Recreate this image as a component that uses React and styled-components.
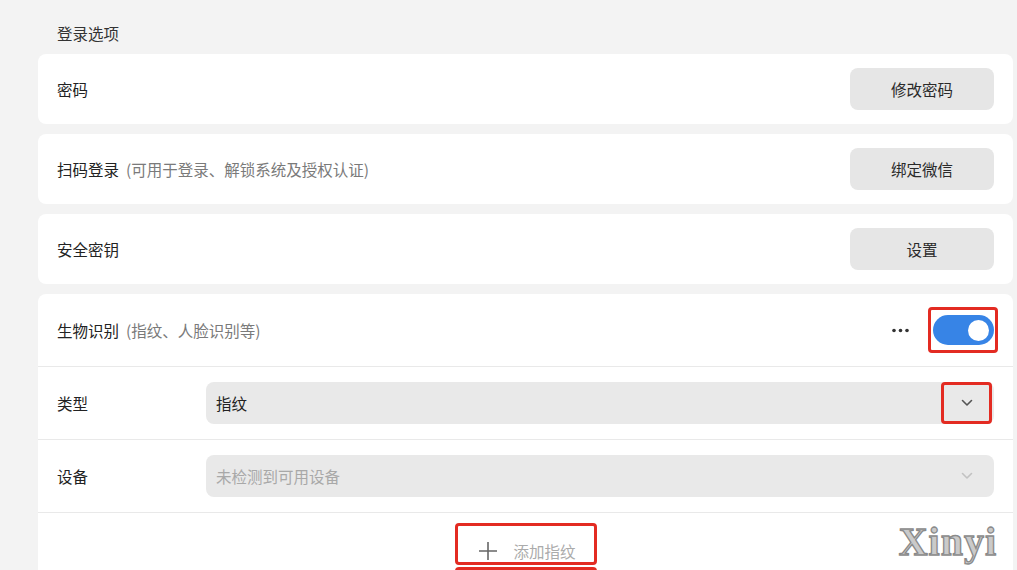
import React from "react";
import styled, { createGlobalStyle } from "styled-components";

const Global = createGlobalStyle`
  html, body { margin: 0; padding: 0; overflow: hidden; background: #f3f3f3; }
  body { font-family: "Noto Sans CJK SC", "Noto Sans", sans-serif; }
`;

const Page = styled.div`
  width: 1017px;
  height: 570px;
  box-sizing: border-box;
  padding: 0 4px 0 38px;
  display: flex;
  flex-direction: column;
  gap: 10px;
  overflow: hidden;
`;

const SectionTitle = styled.div`
  padding: 22px 0 0 19px;
  height: 23px;
  line-height: 22px;
  font-size: 15.5px;
  color: #333;
`;

const Card = styled.div`
  background: #fff;
  border-radius: 8px;
  flex-shrink: 0;
  position: relative;
`;

const Row = styled.div`
  height: ${(p) => p.$h || 70}px;
  box-sizing: border-box;
  padding: 0 19px;
  display: flex;
  align-items: center;
  justify-content: space-between;
  border-bottom: ${(p) => (p.$divider ? "1px solid #e9e9e9" : "none")};
`;

const Label = styled.div`
  font-size: 15.5px;
  color: #222;
  display: flex;
  align-items: center;
  gap: 7px;
`;

const Hint = styled.span`
  color: #7a7a7a;
  font-size: 15.5px;
`;

const Button = styled.button`
  width: 144px;
  height: 42px;
  border: none;
  border-radius: 8px;
  background: #e6e6e6;
  color: #2a2a2a;
  font-family: inherit;
  font-size: 15.5px;
`;

const Controls = styled.div`
  display: flex;
  align-items: center;
  gap: 19px;
`;

const Annot = styled.div`
  border: 3px solid #e32b22;
  border-radius: 4px;
  box-sizing: border-box;
  display: flex;
  align-items: center;
  justify-content: center;
`;

const ToggleBox = styled(Annot)`
  width: 70px;
  height: 46px;
  margin-right: -4px;
`;

const Toggle = styled.div`
  width: 61px;
  height: 30px;
  border-radius: 15px;
  background: #3784e6;
  display: flex;
  align-items: center;
  justify-content: flex-end;
  padding-right: 5px;
  box-sizing: border-box;
`;

const Knob = styled.div`
  width: 21px;
  height: 21px;
  border-radius: 50%;
  background: #fff;
`;

const FieldRow = styled(Row)`
  justify-content: flex-start;
`;

const FieldLabel = styled.div`
  width: 149px;
  flex-shrink: 0;
  font-size: 15.5px;
  color: #222;
`;

const Select = styled.div`
  flex: 1;
  height: 42px;
  border-radius: 8px;
  background: #e9e9e9;
  display: flex;
  align-items: center;
  justify-content: space-between;
  padding: 0 0 0 10px;
  box-sizing: border-box;
  font-size: 15.5px;
  color: ${(p) => (p.$disabled ? "#a8a8a8" : "#222")};
`;

const ChevronBox = styled.div`
  width: 51px;
  height: 42px;
  display: flex;
  align-items: center;
  justify-content: center;
  margin-right: 2px;
  box-sizing: border-box;
  border: 3px solid ${(p) => (p.$marked ? "#e32b22" : "transparent")};
  border-radius: 4px;
`;

const AddRow = styled.div`
  display: flex;
  justify-content: center;
  padding-top: 10px;
  height: 80px;
  box-sizing: border-box;
`;

const AddStack = styled.div`
  display: flex;
  flex-direction: column;
  gap: 2px;
`;

const AddBox = styled(Annot)`
  width: 142px;
  height: 44px;
  gap: 16px;
  padding-top: 14px;
  padding-left: 4px;
  color: #ababab;
  font-size: 15.5px;
`;

const Watermark = styled.div`
  position: absolute;
  right: 16px;
  top: 228px;
  font-family: "Liberation Serif", "DejaVu Serif", serif;
  font-weight: 700;
  font-size: 40px;
  letter-spacing: 1px;
  color: #cacaca;
  -webkit-text-stroke: 1.3px #8a8a8a;
  line-height: 1;
`;

function Dots() {
  return (
    <svg width="17" height="5" viewBox="0 0 17 5">
      <circle cx="2" cy="2.5" r="1.8" fill="#333" />
      <circle cx="8.5" cy="2.5" r="1.8" fill="#333" />
      <circle cx="15" cy="2.5" r="1.8" fill="#333" />
    </svg>
  );
}

function Chevron({ color }) {
  return (
    <svg width="12" height="8" viewBox="0 0 12 8">
      <path d="M1.5 1.5 L6 6 L10.5 1.5" fill="none" stroke={color} strokeWidth="1.6" strokeLinecap="round" strokeLinejoin="round" />
    </svg>
  );
}

function Plus() {
  return (
    <svg width="18" height="18" viewBox="0 0 18 18">
      <path d="M9 0 V18 M0 9 H18" stroke="#666" strokeWidth="1.6" />
    </svg>
  );
}

export default function App() {
  return (
    <>
      <Global />
      <Page>
        <SectionTitle>登录选项</SectionTitle>
        <Card>
          <Row>
            <Label>密码</Label>
            <Button>修改密码</Button>
          </Row>
        </Card>
        <Card>
          <Row>
            <Label>
              扫码登录<Hint>(可用于登录、解锁系统及授权认证)</Hint>
            </Label>
            <Button>绑定微信</Button>
          </Row>
        </Card>
        <Card>
          <Row>
            <Label>安全密钥</Label>
            <Button>设置</Button>
          </Row>
        </Card>
        <Card>
          <Row $h={73} $divider>
            <Label>
              生物识别<Hint>(指纹、人脸识别等)</Hint>
            </Label>
            <Controls>
              <Dots />
              <ToggleBox>
                <Toggle>
                  <Knob />
                </Toggle>
              </ToggleBox>
            </Controls>
          </Row>
          <FieldRow $h={73} $divider>
            <FieldLabel>类型</FieldLabel>
            <Select>
              指纹
              <ChevronBox $marked>
                <Chevron color="#555" />
              </ChevronBox>
            </Select>
          </FieldRow>
          <FieldRow $h={73} $divider>
            <FieldLabel>设备</FieldLabel>
            <Select $disabled>
              未检测到可用设备
              <ChevronBox>
                <Chevron color="#c2c2c2" />
              </ChevronBox>
            </Select>
          </FieldRow>
          <AddRow>
            <AddStack>
              <AddBox>
                <Plus />
                添加指纹
              </AddBox>
              <AddBox />
            </AddStack>
          </AddRow>
          <Watermark>Xinyi</Watermark>
        </Card>
      </Page>
    </>
  );
}
